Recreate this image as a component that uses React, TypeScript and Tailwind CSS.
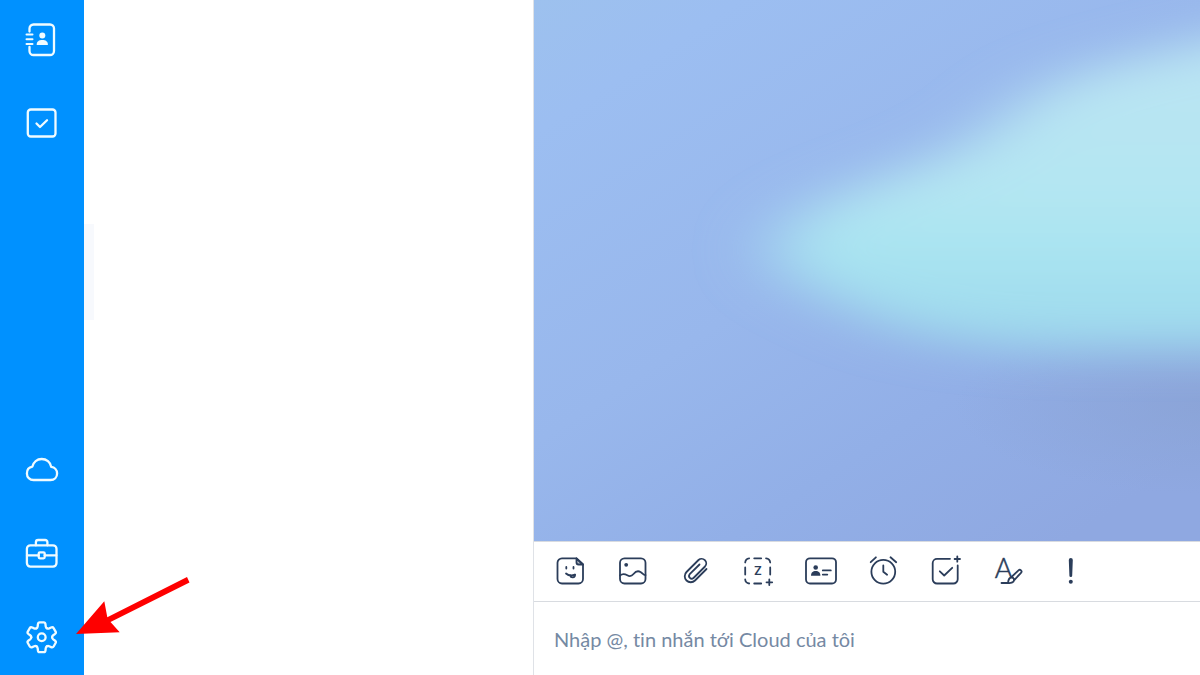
import React from 'react';

type IconProps = { children: React.ReactNode; strokeWidth?: number };

const Icon = ({ children, strokeWidth = 2.3 }: IconProps) => (
  <svg
    className="size-9 shrink-0 overflow-visible"
    viewBox="0 0 36 36"
    fill="none"
    stroke="currentColor"
    strokeWidth={strokeWidth}
    strokeLinecap="round"
    strokeLinejoin="round"
    aria-hidden="true"
  >
    {children}
  </svg>
);

const gearAngles = [0, 60, 120, 180, 240, 300];

const topNav = [
  {
    label: 'Danh bạ',
    icon: (
      <>
        <path d="M5.5 10.5v-3a4 4 0 0 1 4-4H26a4 4 0 0 1 4 4V30a4 4 0 0 1-4 4H9.5a4 4 0 0 1-4-4v-4" />
        <path d="M2.5 13.5h6M2.5 18.3h6M2.5 23h6" strokeWidth="2" />
        <circle cx="18.3" cy="14.5" r="3" fill="currentColor" stroke="none" />
        <path d="M12.7 23.9c0-3.4 2.200-4.800 5.600-4.800s5.600 1.400 5.600 4.800z" fill="currentColor" stroke="none" />
      </>
    )
  },
  {
    label: 'Việc cần làm',
    icon: (
      <>
        <rect x="3.8" y="4.5" width="27.700" height="27" rx="3" />
        <path d="m12.500 18.500 3.500 3.500 7-6.800" />
      </>
    )
  }
];

const bottomNav = [
  {
    label: 'Cloud của tôi',
    icon: (
      <path d="M9.500 29c-3.800 0-6.600-2.900-6.600-6.600 0-3.600 2.400-6.200 5.500-6.800C9.400 11 13.100 8 17.700 8c4.800 0 8.700 3.300 9.500 7.900 3.400.5 5.900 3.100 5.900 6.600 0 3.700-2.700 6.500-6.600 6.500z" />
    )
  },
  {
    label: 'Công cụ',
    icon: (
      <>
        <rect x="2.9" y="10.3" width="29.6" height="21.3" rx="3.5" />
        <path d="M11.900 10.300V7.300A2.300 2.300 0 0 1 14.200 5h6.900a2.300 2.300 0 0 1 2.300 2.300v3M3 20.300h11.700M20.700 20.300h11.600" />
        <rect x="14.700" y="17.300" width="6" height="6" rx="1.200" />
      </>
    )
  },
  {
    label: 'Cài đặt',
    icon: (
      <g transform="translate(17.700 18.300)">
        {gearAngles.map((angle) => (
          <path
            key={angle}
            transform={`rotate(${angle})`}
            d="M-5.200-9Q-4.200-9.600-4-11L-3.800-13Q-3.600-14.900-2-14.900H2Q3.600-14.900 3.800-13L4-11Q4.200-9.600 5.200-9"
          />
        ))}
        <circle r="3.900" />
      </g>
    )
  }
];

const tools = [
  {
    label: 'Gửi sticker',
    icon: (
      <>
        <path d="M24.500 5.300H10A4.500 4.500 0 0 0 5.500 9.800V26a4.500 4.500 0 0 0 4.500 4.500h16.500A4.500 4.500 0 0 0 31 26V11.500z" />
        <path d="M24.500 5.300v4.200a2 2 0 0 0 2 2H31z" fill="currentColor" fillOpacity=".35" />
        <path d="M14.300 14v1.500M21.500 14v1.500M14 20.500c2.200 2 5.500 2.500 9 1.200" />
        <path d="M18.300 22.500c.4 2.500 4.800 2.700 4.700-.8" />
      </>
    )
  },
  {
    label: 'Gửi hình ảnh',
    icon: (
      <>
        <rect x="5" y="5.300" width="25.500" height="25.200" rx="4.500" />
        <circle cx="11.200" cy="11.800" r="1.900" fill="currentColor" stroke="none" />
        <path d="M5 22.500c2.700-2.200 5-1.500 7.300-.2s4.200 1.200 6.200-1.300 4.500-3.500 7-2 2.500 3 5 3.200" />
      </>
    )
  },
  {
    label: 'Đính kèm file',
    icon: (
      <path d="M29.500 16 18 27.500A6 6 0 0 1 9.500 19l12-12a4.600 4.600 0 0 1 6.500 6.500L16.500 25a2.700 2.700 0 0 1-3.800-3.800L22.500 11.500" />
    )
  },
  {
    label: 'Chụp màn hình',
    icon: (
      <>
        <path d="M5.200 9.500c.2-2.500 1.500-4 4-4.200M14.200 5.300h7M26 5.300c2.500.2 4 1.700 4.200 4.200M5.200 14.500v7M30.200 14.500v7M5.200 26.500c.2 2.500 1.500 3.700 4 4M14.200 30.500h7M29.300 26.500V32M26.500 29.300h5.700" />
        <text x="18" y="22" textAnchor="middle" fontFamily="Inter, sans-serif" fontSize="12" fontWeight="600" fill="currentColor" stroke="none">Z</text>
      </>
    )
  },
  {
    label: 'Gửi danh thiếp',
    icon: (
      <>
        <rect x="3" y="5.300" width="30" height="25.200" rx="4" />
        <circle cx="12.700" cy="14.500" r="2.300" fill="currentColor" stroke="none" />
        <path d="M8 22.800c0-3.500 1.800-4.900 4.700-4.900s4.700 1.400 4.700 4.900z" fill="currentColor" stroke="none" />
        <path d="M19.800 17.400h8M19.800 21.600h4.500" />
      </>
    )
  },
  {
    label: 'Tạo nhắc hẹn',
    icon: (
      <>
        <circle cx="18.300" cy="18.700" r="11.900" />
        <path d="m5.700 9.200 5.200-4.900M25.500 4.300l5.700 4.900M18.300 12.500v6.200l3.800 3" />
      </>
    )
  },
  {
    label: 'Giao việc',
    icon: (
      <path d="M22 5.800H9A4.300 4.300 0 0 0 4.700 10v16.200A4.300 4.300 0 0 0 9 30.500h16.400a4.300 4.300 0 0 0 4.300-4.300V12.500M29.300 3.300v5.400M26.600 6H32M11.800 18.300l4.400 4.200 8-7.700" />
    )
  },
  {
    label: 'Định dạng tin nhắn',
    icon: (
      <>
        <text x="13.700" y="25" textAnchor="middle" fontFamily="Lato, sans-serif" fontSize="27" fontWeight="300" fill="currentColor" stroke="currentColor" strokeWidth=".5">A</text>
        <path d="M11.500 30h7.500" />
        <path d="m21.500 24 7-6.700a1.700 1.700 0 0 1 2.500 2.500l-6.500 7z" fill="white" />
        <path d="M18 30c.3-3.400 1-5.500 3.500-5.500A2.400 2.400 0 0 1 24 27c0 2.200-2.500 3.200-6 3z" fill="white" />
      </>
    )
  },
  {
    label: 'Tin nhắn quan trọng',
    icon: (
      <>
        <path d="M15.800 7a2 2 0 0 1 4 0l-.6 15.700a1.400 1.400 0 0 1-2.800 0z" fill="currentColor" stroke="none" />
        <circle cx="17.800" cy="28.800" r="2" fill="currentColor" stroke="none" />
      </>
    )
  }
];

const NavGroup = ({ items }: { items: typeof topNav }) => (
  <div className="flex flex-col gap-5">
    {items.map((item) => (
      <button key={item.label} type="button" aria-label={item.label} className="flex h-16 items-center justify-center">
        <Icon>{item.icon}</Icon>
      </button>
    ))}
  </div>
);

const Wallpaper = () => (
  <svg className="absolute inset-0 size-full" viewBox="0 0 666 541" preserveAspectRatio="none" aria-hidden="true">
    <defs>
      <linearGradient id="sky" x1="0" y1="0" x2="0.8" y2="1">
        <stop offset="0" stopColor="#9dc1ee" />
        <stop offset="0.15" stopColor="#9cbef1" />
        <stop offset="0.5" stopColor="#98b7ec" />
        <stop offset="0.75" stopColor="#92afe7" />
        <stop offset="1" stopColor="#8fa8e1" />
      </linearGradient>
      <linearGradient id="glow" gradientUnits="userSpaceOnUse" x1="0" y1="60" x2="0" y2="350">
        <stop offset="0" stopColor="#bae4f3" />
        <stop offset="0.45" stopColor="#b4e6f2" />
        <stop offset="0.65" stopColor="#a9e4f1" />
        <stop offset="1" stopColor="#9dd8ec" />
      </linearGradient>
      <radialGradient id="shade">
        <stop offset="0" stopColor="#8aa3d5" stopOpacity="0.8" />
        <stop offset="1" stopColor="#8aa3d5" stopOpacity="0" />
      </radialGradient>
      <filter id="soft" x="-30%" y="-30%" width="160%" height="160%">
        <feGaussianBlur stdDeviation="36 22" />
      </filter>
    </defs>
    <rect width="666" height="541" fill="url(#sky)" />
    <ellipse cx="680" cy="405" rx="260" ry="90" fill="url(#shade)" />
    <path
      d="M240 246C250 214 300 196 360 174S440 142 480 108 580 62 666 42L800 10V350H560C450 350 370 338 315 308 270 288 235 270 240 246z"
      fill="url(#glow)"
      filter="url(#soft)"
    />
  </svg>
);

const App = () => {
  return (
    <div className="relative flex h-screen overflow-hidden bg-white">
      <nav className="flex w-21 shrink-0 flex-col justify-between bg-[#0091ff] pt-[7px] pb-[6px] text-[#f0fbff]">
        <NavGroup items={topNav} />
        <NavGroup items={bottomNav} />
      </nav>

      <aside className="flex w-[450px] shrink-0 flex-col border-r border-[#dfe2e7] pt-56">
        <div className="h-24 w-[10px] bg-[#f7f9fd]" />
      </aside>

      <main className="flex min-w-0 flex-1 flex-col">
        <div className="relative flex-1 overflow-hidden">
          <Wallpaper />
        </div>
        <div className="border-t border-b border-[#d8dbe0] bg-white pl-[14px]">
          <div className="flex h-[59px] w-full max-w-[545px] items-center justify-between pb-0.5 text-[#2b3d5a]">
            {tools.map((tool) => (
              <button key={tool.label} type="button" aria-label={tool.label} className="flex h-11 w-11 items-center justify-center">
                <Icon strokeWidth={1.8}>{tool.icon}</Icon>
              </button>
            ))}
          </div>
        </div>
        <input
          type="text"
          aria-label="Tin nhắn"
          placeholder="Nhập @, tin nhắn tới Cloud của tôi"
          className="h-[73px] w-full bg-white px-5 font-['Lato','Noto_Sans',sans-serif] text-[20px] text-[#22385a] outline-none [font-variant-ligatures:none] placeholder:text-[#7589a3]"
        />
      </main>

      <svg className="pointer-events-none absolute bottom-[38px] left-[74px] h-16 w-[118px]" viewBox="0 0 118 64" aria-hidden="true">
        <path d="M2 61 30.300 28.300 33.300 44.200 113 4l2.500 5.500L36.500 49l9.200 10.300z" fill="#fe0000" />
      </svg>
    </div>
  );
};

export default App;
